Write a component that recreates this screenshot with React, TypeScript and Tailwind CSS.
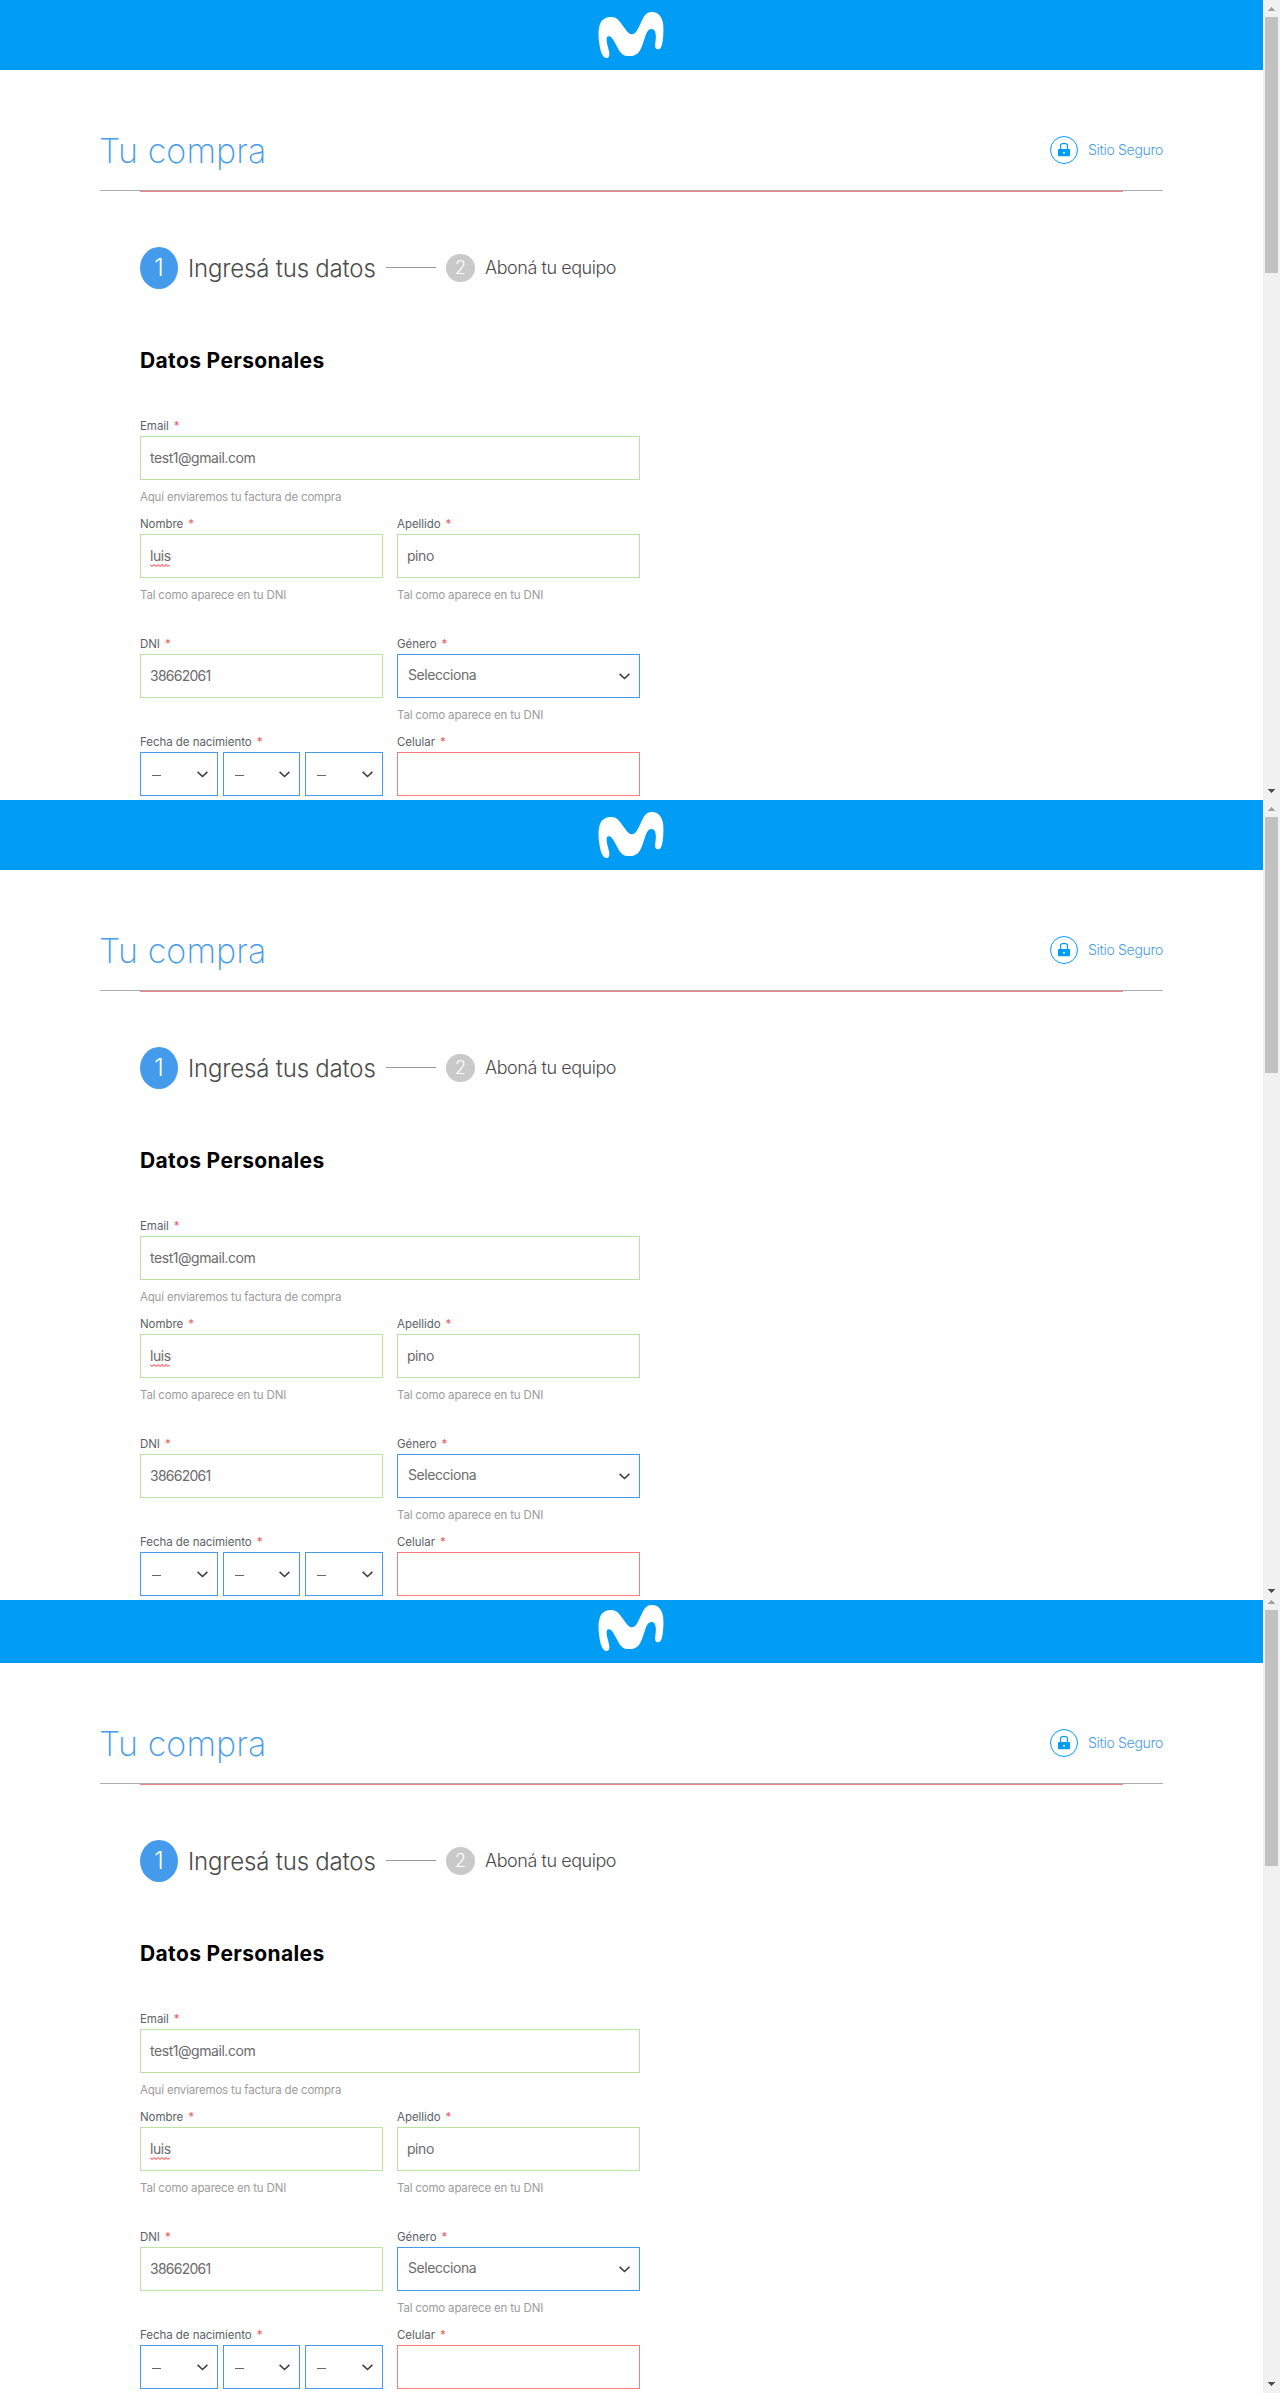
import type { ReactNode } from 'react';

type Tone = 'valid' | 'idle' | 'error';

const borders: Record<Tone, string> = {
  valid: 'border-[#b9e3a2]',
  idle: 'border-[#449bec]',
  error: 'border-[#fb7b7d]',
};

function Logo() {
  return (
    <svg className="mt-[11px] mr-px h-12 w-[66px]" viewBox="55.5 33 198 144" fill="#fff" aria-label="Movistar">
      <path d="M82 174C70 174 64 160 60 135C55 105 56 82 64 67C72 54 84 51 95 51C110 51 118 60 126 72L140 91C147 101 152 103 156 103C163 103 169 99 175 87L187 62C194 46 203 36 217 36C236 36 248 50 251 72C253 95 251 125 246 138C243 146 239 148 235 148C229 148 226 143 227 133C228 122 231 107 227 96C225 89 221 86 215 87C206 88 202 96 197 110C190 130 185 152 172 162C164 168 152 169 142 168C128 166 120 155 113 140L101 119C97 112 92 108 87 109C81 110 80 118 83 132L89 156C91 168 88 174 82 174Z" />
    </svg>
  );
}

function Lock() {
  return (
    <svg className="h-7 w-7" viewBox="0 0 28 28" fill="none">
      <circle cx="14" cy="14" r="13.5" stroke="#019df4" />
      <path d="M10.6 13.5V9.5Q10.6 7.6 12.5 7.6H15.5Q17.4 7.6 17.4 9.5V13.5" stroke="#019df4" strokeWidth="1.2" />
      <rect x="8" y="13" width="12" height="7.3" rx="0.8" fill="#019df4" />
      <rect x="13.2" y="16" width="1.6" height="1.6" fill="#fff" />
    </svg>
  );
}

function Chevron() {
  return (
    <svg className="h-[7px] w-[11px] shrink-0" viewBox="0 0 11 7" fill="none">
      <path d="M0.6 0.9L5.5 5.5L10.4 0.9" stroke="#3c3c3c" strokeWidth="1.5" />
    </svg>
  );
}

function Field({ label, tone, help, children, bare }: { label: string; tone?: Tone; help?: string; children?: ReactNode; bare?: boolean }) {
  return (
    <div className="h-[87px]">
      <div className="flex h-[18px] text-[11.5px] leading-4 tracking-[-0.05px] text-[#5c5f66]">
        {label}
        <span className="ml-[5px] text-[#e5605f]">*</span>
      </div>
      {bare ? (
        children
      ) : (
        <div className={`flex h-11 items-center border pl-[9px] text-sm tracking-[-0.45px] text-[#6b6b6b] ${borders[tone ?? 'idle']}`}>{children}</div>
      )}
      {help && <div className="mt-[9px] text-[11.5px] leading-4 tracking-[-0.18px] text-[#9c9c9c]">{help}</div>}
    </div>
  );
}

function DateSelect() {
  return (
    <div className="flex h-11 items-center justify-between border border-[#449bec] pr-[9px] pl-[11px]">
      <span className="mt-[3px] h-px w-[9px] bg-[#666]" />
      <Chevron />
    </div>
  );
}

function Scrollbar() {
  return (
    <div className="flex h-[800px] w-[17px] flex-col items-center bg-[#f1f1f1]">
      <svg className="mt-[7px] h-1 w-[7px]" viewBox="0 0 7 4" fill="#a3a3a3" shapeRendering="crispEdges">
        <path d="M3 0H4V1H5V2H6V3H7V4H0V3H1V2H2V1H3Z" />
      </svg>
      <div className="mt-[6px] h-64 w-[13px] bg-[#c1c1c1]" />
      <svg className="mt-auto mb-[7px] h-1 w-[7px]" viewBox="0 0 7 4" fill="#505050" shapeRendering="crispEdges">
        <path d="M3 4H4V3H5V2H6V1H7V0H0V1H1V2H2V3H3Z" />
      </svg>
    </div>
  );
}

function Checkout() {
  return (
    <div className="flex h-[800px] w-[1280px] bg-white">
      <main className="w-[1263px]">
        <header className="flex h-[70px] justify-center bg-[#019df4]">
          <Logo />
        </header>

        <div className="mx-[100px] flex h-[121px] justify-between border-b border-[#adadad] pt-[61px]">
          <h1 className="-ml-px text-[34px] leading-10 font-[250] tracking-[0.12px] text-[#449bec]">Tu compra</h1>
          <div className="mt-[5px] flex h-7 items-center text-[#449bec]">
            <Lock />
            <span className="ml-[10px] text-sm font-light tracking-[-0.3px]">Sitio Seguro</span>
          </div>
        </div>
        <div className="mx-[140px] h-px bg-[#f08484]" />

        <div className="mt-[55px] ml-[140px] flex h-[42px] items-center whitespace-nowrap text-[#4a4a4a]">
          <span className="flex h-[42px] w-[38px] items-center justify-center rounded-[50%] bg-[#449bec] text-2xl font-light text-white">1</span>
          <span className="mt-px ml-[10px] w-[188px] text-2xl font-light tracking-[-0.2px]">Ingresá tus datos</span>
          <span className="ml-[10px] -mt-px h-px w-[50px] bg-[#999]" />
          <span className="ml-[10px] flex h-7 w-[29px] items-center justify-center rounded-[50%] bg-[#c9c9c9] text-lg leading-7 font-light text-white">2</span>
          <span className="ml-[10px] text-lg font-light tracking-[-0.45px]">Aboná tu equipo</span>
        </div>

        <section className="ml-[140px] w-[500px]">
          <h2 className="mt-[58px] text-[21px] leading-7 font-bold tracking-[0.36px] text-black">Datos Personales</h2>
          <div className="mt-[43px]">
            <Field label="Email" tone="valid" help="Aquí enviaremos tu factura de compra">test1@gmail.com</Field>
          </div>
          <div className="mt-[11px] grid grid-cols-2 gap-x-[14px]">
            <Field label="Nombre" tone="valid" help="Tal como aparece en tu DNI">
              <span className="relative">
                luis
                <svg className="absolute bottom-[-1px] left-0 h-[3px] w-5" viewBox="0 0 20 3" fill="none">
                  <path d="M0 .5L2 2.5L4 .5L6 2.5L8 .5L10 2.5L12 .5L14 2.5L16 .5L18 2.5L20 .5" stroke="#f22" />
                </svg>
              </span>
            </Field>
            <Field label="Apellido" tone="valid" help="Tal como aparece en tu DNI">pino</Field>
          </div>
          <div className="mt-[33px] grid grid-cols-2 gap-x-[14px]">
            <Field label="DNI" tone="valid">
              <span className="tracking-[-0.75px]">38662061</span>
            </Field>
            <Field label="Género" tone="idle" help="Tal como aparece en tu DNI">
              <div className="flex grow items-center justify-between pr-[9px] pl-px">
                <span className="-mt-0.5">Selecciona</span>
                <Chevron />
              </div>
            </Field>
          </div>
          <div className="mt-[11px] grid h-[62px] grid-cols-2 gap-x-[14px]">
            <Field label="Fecha de nacimiento" bare>
              <div className="grid grid-cols-[78px_77px_78px] gap-x-[5px]">
                <DateSelect />
                <DateSelect />
                <DateSelect />
              </div>
            </Field>
            <Field label="Celular" tone="error" />
          </div>
        </section>
      </main>
      <Scrollbar />
    </div>
  );
}

export default function App() {
  return (
    <div className="w-[1280px] font-['Inter',sans-serif]">
      <div className="h-[800px] overflow-hidden">
        <Checkout />
      </div>
      <div className="h-[800px] overflow-hidden">
        <Checkout />
      </div>
      <div className="flex h-[793px] items-end overflow-hidden">
        <Checkout />
      </div>
    </div>
  );
}
